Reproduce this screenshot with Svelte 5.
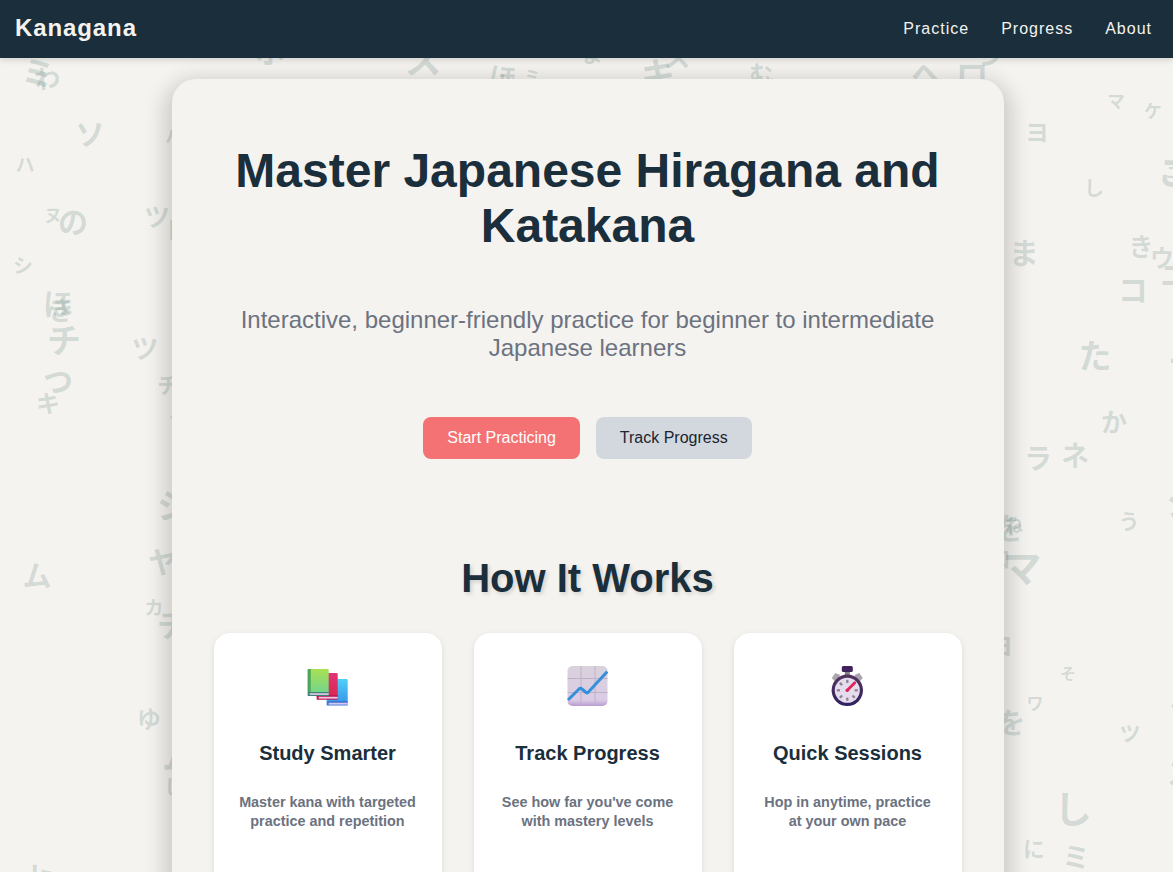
<script>
  // [glyph, centre x, centre y, size, rotation]
  const kana = [
    ['ミ', 38, 75, 33, 3], ['わ', 47, 80, 26, -8], ['ソ', 90, 135, 30, 0], ['ハ', 25, 166, 19, 0],
    ['ヌ', 53, 217, 18, 0], ['の', 73, 223, 30, 0], ['ツ', 157, 219, 26, 0], ['シ', 23, 268, 20, 0],
    ['ほ', 58, 305, 30, 0], ['き', 61, 312, 26, 0], ['チ', 64, 342, 34, 0], ['つ', 58, 382, 30, 0],
    ['キ', 48, 405, 24, 0], ['ツ', 145, 350, 27, 0], ['チ', 168, 386, 22, 0], ['ス', 180, 411, 24, 0],
    ['シ', 174, 506, 35, 0], ['ヤ', 163, 563, 30, 0], ['ム', 37, 577, 29, 0], ['カ', 154, 609, 19, 0],
    ['チ', 173, 626, 32, 0], ['ゆ', 149, 721, 24, 0], ['ム', 179, 759, 34, 0], ['し', 174, 790, 20, 0],
    ['ト', 38, 878, 28, 0], ['ら', 46, 882, 24, 0], ['ハ', 174, 138, 18, 0], ['ロ', 180, 231, 26, 0],
    ['ホ', 270, 53, 30, 0], ['ス', 423, 61, 37, 0], ['ほ', 503, 79, 28, 5], ['お', 506, 89, 28, 0],
    ['ミ', 532, 78, 17, 0], ['ま', 592, 55, 22, 0], ['キ', 658, 76, 34, 0], ['ス', 677, 58, 27, 0],
    ['む', 761, 76, 24, 0], ['あ', 763, 91, 32, 0], ['ヘ', 926, 75, 30, 0], ['ロ', 972, 77, 33, 0],
    ['つ', 987, 57, 28, 0], ['マ', 1116, 103, 18, 0], ['ケ', 1153, 113, 18, 0], ['ヨ', 1037, 134, 24, 0],
    ['し', 1094, 191, 20, 0], ['ご', 1175, 174, 34, 0], ['ニ', 1174, 174, 16, 0], ['ま', 1024, 254, 30, 0],
    ['き', 1141, 248, 25, 0], ['ウ', 1162, 260, 24, 0], ['ニ', 1174, 277, 28, 0], ['コ', 1133, 291, 30, 0],
    ['た', 1095, 357, 33, 0], ['か', 1114, 424, 26, 0], ['ラ', 1038, 460, 28, 0], ['ネ', 1075, 457, 28, 0],
    ['う', 1129, 523, 21, 0], ['を', 1009, 529, 30, 0], ['ね', 1014, 527, 18, 0], ['マ', 1022, 568, 39, 0],
    ['ロ', 999, 561, 24, 0], ['ヨ', 1001, 647, 25, 0], ['を', 1011, 724, 29, 0], ['そ', 1068, 676, 16, 0],
    ['ワ', 1035, 705, 17, 0], ['ツ', 1130, 735, 21, 0], ['し', 1073, 810, 38, 0], ['に', 1034, 850, 22, 0],
    ['ミ', 1076, 859, 28, 0], ['ナ', 1184, 366, 32, 0], ['き', 1183, 440, 24, 0], ['シ', 1183, 505, 34, 0],
    ['ヘ', 1182, 706, 24, 0], ['ス', 1181, 775, 28, 0], ['ア', 995, 113, 20, 0]
  ];
  const links = ['Practice', 'Progress', 'About'];
  const features = [
    { icon: 'books', title: 'Study Smarter', lines: ['Master kana with targeted', 'practice and repetition'] },
    { icon: 'chart', title: 'Track Progress', lines: ["See how far you've come", 'with mastery levels'] },
    { icon: 'watch', title: 'Quick Sessions', lines: ['Hop in anytime, practice', 'at your own pace'] }
  ];
  const ticks = [0, 45, 90, 135, 180, 225, 270, 315];
</script>

<div class="page">
  <div class="backdrop" aria-hidden="true">
    {#each kana as [glyph, x, y, size, turn]}
      <span style="left:{x}px;top:{y - 3}px;font-size:{size}px;transform:translate(-50%,-50%) rotate({turn}deg)">{glyph}</span>
    {/each}
  </div>

  <header>
    <div class="logo">Kanagana</div>
    <nav>{#each links as link}<a href="#top">{link}</a>{/each}</nav>
  </header>

  <main>
    <section class="hero">
      <h1>Master Japanese Hiragana and Katakana</h1>
      <p>Interactive, beginner-friendly practice for beginner to intermediate Japanese learners</p>
      <div class="actions">
        <button class="primary">Start Practicing</button>
        <button class="secondary">Track Progress</button>
      </div>
    </section>

    <h2>How It Works</h2>
    <section class="features">
      {#each features as f}
        <article>
          {#if f.icon === 'books'}
            <svg viewBox="0 0 42 42">
              <defs>
                <linearGradient id="g" x2="0" y2="1"><stop stop-color="#a9e052" /><stop offset="1" stop-color="#72d68d" /></linearGradient>
                <linearGradient id="r" x2="0" y2="1"><stop stop-color="#e13476" /><stop offset="1" stop-color="#dd2750" /></linearGradient>
                <linearGradient id="b" x2="0" y2="1"><stop stop-color="#50d0f8" /><stop offset="1" stop-color="#3798ea" /></linearGradient>
              </defs>
              <g transform="translate(0.700 3)">
                <path d="M20 12q0-1 1-1h19q1 0 1 1v22.500H20z" fill="url(#b)" />
                <path d="M20 34.500q0-1.500 1.500-1.500H41v4.500H20z" fill="#3d78d4" />
                <path d="M22 34.800h19v1.800H22z" fill="#d9c5f2" />
                <path d="M10 6q0-1 1-1h19q1 0 1 1v23H10z" fill="url(#r)" />
                <path d="M10 28.500q0-1.500 1.500-1.500H31v4.700H10z" fill="#c01a55" />
                <path d="M12 28.800h19v1.800H12z" fill="#f0c9e9" />
                <path d="M1 2q0-1 1-1h19q1 0 1 1v23H1z" fill="url(#g)" />
                <path d="M1 2q0-1 1-1h2v24H1z" fill="#4aa45a" />
                <path d="M1 25.500Q1 24 2.500 24H22v4H1z" fill="#3f8373" />
                <path d="M3 25.200h19v1.700H3z" fill="#dfcaf0" />
              </g>
            </svg>
          {:else if f.icon === 'chart'}
            <svg viewBox="0 0 42 42">
              <defs><linearGradient id="p" x2="0" y2="1"><stop stop-color="#d9d2dc" /><stop offset="0.850" stop-color="#dbcbe5" /><stop offset="1" stop-color="#b99bd0" /></linearGradient></defs>
              <rect x="1.500" y="1" width="40" height="40" rx="5" fill="url(#p)" />
              <path d="M15 1v40M29 1v40M1.500 13.500h40M1.500 27.500h40" stroke="#beb3c4" stroke-width="1" />
              <path d="M2 35 13 24q1.500-1.200 3 0l4 3.500q1 .8 2 0L41.300 6.500" fill="none" stroke="#3490db" stroke-width="3" />
            </svg>
          {:else}
            <svg viewBox="0 0 42 42">
              <defs><linearGradient id="w" x2="0" y2="1"><stop stop-color="#55335f" /><stop offset="1" stop-color="#302260" /></linearGradient></defs>
              <g transform="translate(0.300 0)">
                <path d="M18.500 6h5v5h-5z" fill="#85818b" />
                <rect x="15.500" y="1" width="11" height="6" rx="1.500" fill="#40235c" />
                <path d="m5.500 13 3.500-5 5 2-5 7zM36.500 13l-3.500-5-5 2 5 7z" fill="#aaa6ae" />
                <circle cx="21" cy="25.300" r="15.700" fill="url(#w)" />
                <circle cx="21" cy="25.300" r="12.500" fill="#e5dced" />
                {#each ticks as t}
                  <path d="M21 14.800v3.200" stroke="#8d8495" stroke-width="2.300" transform="rotate({t} 21 25.300)" />
                {/each}
                <circle cx="21" cy="25.300" r="1.800" fill="#b5315c" />
                <path d="m21 25.300 7.500-7.500" stroke="#e5265c" stroke-width="2.800" stroke-linecap="round" />
              </g>
            </svg>
          {/if}
          <h3>{f.title}</h3>
          <p>{f.lines[0]}<br />{f.lines[1]}</p>
        </article>
      {/each}
    </section>
  </main>
</div>

<style>
  :global(body) { margin: 0; background: #f5f3ef; }
  .page {
    position: relative;
    height: 872px;
    overflow: hidden;
    background: #f5f3ef;
    font-family: "Liberation Sans", Arial, sans-serif;
    color: #1a2e3b;
  }
  .backdrop { position: absolute; inset: 0; overflow: hidden; }
  .backdrop span {
    position: absolute;
    font-family: "Noto Sans CJK JP", sans-serif;
    font-weight: 700;
    line-height: 1;
    white-space: nowrap;
    color: rgba(40, 90, 85, 0.165);
  }
  header {
    position: relative;
    z-index: 2;
    display: flex;
    align-items: center;
    justify-content: space-between;
    height: 58px;
    box-sizing: border-box;
    padding: 0 21px 2px 15px;
    background: #1a2e3b;
    box-shadow: 0 2px 6px rgba(0, 0, 0, 0.15);
    color: #f5f3ef;
  }
  .logo { font-size: 24px; font-weight: 700; letter-spacing: 0.9px; }
  nav { display: flex; gap: 32px; padding-top: 2px; }
  nav a { color: inherit; text-decoration: none; font-size: 16px; letter-spacing: 1px; }
  main {
    position: relative;
    width: 832px;
    height: 1100px;
    box-sizing: border-box;
    margin: 21px 0 0 172px;
    padding: 64px 42px;
    border-radius: 24px;
    background: #f5f3ef;
    box-shadow: 0 8px 20px 8px rgba(0, 0, 0, 0.16);
    text-align: center;
  }
  .hero { padding-right: 1px; }
  h1 { margin: 0; font-size: 48px; line-height: 55px; }
  .hero p { margin: 53px 0 0; font-size: 24px; line-height: 28px; color: #6b7280; }
  .actions { display: flex; justify-content: center; gap: 16px; margin-top: 55px; }
  button {
    height: 42px;
    padding: 0 24px;
    border: 0;
    border-radius: 8px;
    font: 16px "Liberation Sans", Arial, sans-serif;
  }
  .primary { background: #f57274; color: #fff; }
  .secondary { background: #d3d8df; color: #1a2530; }
  h2 { margin: 96px 0 32px; padding-right: 1px; font-size: 40px; line-height: 46px; text-shadow: 2px 2px 4px rgba(0, 0, 0, 0.15); }
  .features { display: grid; grid-template-columns: repeat(3, 228px); gap: 32px; }
  article {
    height: 300px;
    box-sizing: border-box;
    padding: 32px 17px 32px 16px;
    border-radius: 16px;
    background: #fff;
    box-shadow: 0 2px 6px rgba(0, 0, 0, 0.1);
  }
  article svg { display: block; width: 42px; height: 42px; margin: 0 0 0 76px; }
  h3 { margin: 35px 0 0; font-size: 20px; line-height: 23px; }
  article p { margin: 28px 0 0; font-size: 14.4px; font-weight: 700; line-height: 19px; color: #6b7280; }
</style>
